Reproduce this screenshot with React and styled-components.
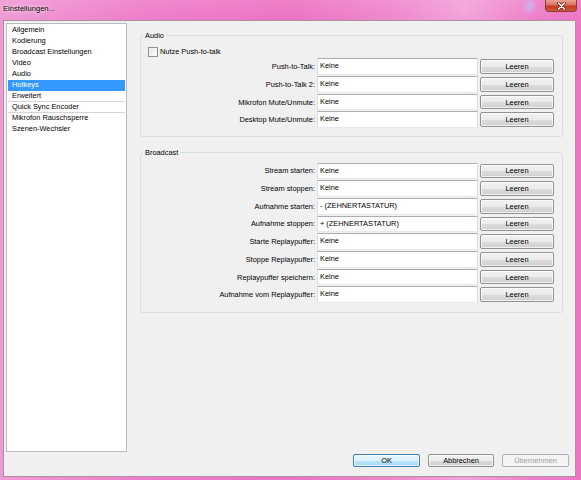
import React from 'react';
import styled, { createGlobalStyle } from 'styled-components';

const GlobalStyle = createGlobalStyle`
  html, body {
    margin: 0;
    padding: 0;
    background: #ee7ec9;
  }
  * {
    box-sizing: border-box;
  }
`;

const pages = [
  'Allgemein',
  'Kodierung',
  'Broadcast Einstellungen',
  'Video',
  'Audio',
  'Hotkeys',
  'Erweitert',
  'Quick Sync Encoder',
  'Mikrofon Rauschsperre',
  'Szenen-Wechsler',
];

const audioKeys = [
  ['Push-to-Talk:', 'Keine'],
  ['Push-to-Talk 2:', 'Keine'],
  ['Mikrofon Mute/Unmute:', 'Keine'],
  ['Desktop Mute/Unmute:', 'Keine'],
];

const broadcastKeys = [
  ['Stream starten:', 'Keine'],
  ['Stream stoppen:', 'Keine'],
  ['Aufnahme starten:', '- (ZEHNERTASTATUR)'],
  ['Aufnahme stoppen:', '+ (ZEHNERTASTATUR)'],
  ['Starte Replaypuffer:', 'Keine'],
  ['Stoppe Replaypuffer:', 'Keine'],
  ['Replaypuffer speichern:', 'Keine'],
  ['Aufnahme vom Replaypuffer:', 'Keine'],
];

const Frame = styled.div`
  width: 581px;
  height: 480px;
  display: flex;
  flex-direction: column;
  padding: 0 5px 3px 3px;
  font-family: 'Liberation Sans', Arial, sans-serif;
  font-size: 7.4px;
  color: #000;
  background:
    linear-gradient(180deg, rgba(255, 255, 255, 0.1) 0%, rgba(255, 255, 255, 0) 20px),
    linear-gradient(90deg, #f09ad3 0%, #ee7cc9 25%, #ec72c3 50%, #ef88cd 68%, #f3a2d8 80%, #ee7ec9 92%, #ec76c5 100%);
`;

const TitleBar = styled.div`
  height: 20px;
  display: flex;
  align-items: flex-start;
`;

const Title = styled.div`
  padding: 4px 0 0 0;
  font-size: 7.6px;
  text-shadow: 0 0 5px rgba(255, 255, 255, 0.9), 0 0 2px rgba(255, 255, 255, 0.8);
`;

const Captions = styled.div`
  margin-left: auto;
  margin-right: -1px;
  display: flex;
  align-items: flex-start;
  gap: 8px;
`;

const GhostButton = styled.div`
  width: 15px;
  height: 15px;
  border-radius: 0 0 4px 4px;
  background: radial-gradient(circle at 50% 40%, rgba(200, 185, 245, 0.9), rgba(236, 140, 210, 0) 75%);
`;

const CloseButton = styled.div`
  width: 32px;
  height: 12px;
  display: flex;
  align-items: center;
  justify-content: center;
  border: 1px solid #8e3a35;
  border-top: none;
  border-radius: 0 0 4px 4px;
  background: linear-gradient(180deg, #e9a393 0%, #d8735f 45%, #c53a22 55%, #d2573c 100%);
`;

const Client = styled.div`
  flex: 1;
  display: flex;
  flex-direction: column;
  background: #f0f0f0;
  border: 1px solid #a7939f;
`;

const Main = styled.div`
  flex: 1;
  display: flex;
  padding: 2px 0 0 2px;
`;

const PageList = styled.ul`
  list-style: none;
  margin: 0;
  padding: 1px;
  width: 121px;
  background: #fff;
  border: 1px solid #b9bcc1;
`;

const PageItem = styled.li`
  height: 11px;
  line-height: 10px;
  padding-left: 4px;
  white-space: nowrap;
  background: ${(p) => (p.$selected ? '#3399ff' : 'transparent')};
  color: ${(p) => (p.$selected ? '#fff' : '#000')};
  border-bottom: 1px solid ${(p) => (p.$divider ? '#d4d4d4' : 'transparent')};
`;

const Panel = styled.div`
  margin: 8px 0 0 13px;
  width: 423px;
  display: flex;
  flex-direction: column;
  gap: 11px;
`;

const Group = styled.fieldset`
  margin: 0;
  padding: ${(p) => p.$pad};
  border: 1px solid #d5dfe5;
  border-radius: 3px;
  min-width: 0;
`;

const Legend = styled.legend`
  margin-left: 2px;
  padding: 0 2px;
  line-height: 9px;
`;

const CheckRow = styled.label`
  height: 11px;
  display: flex;
  align-items: center;
  gap: 2px;
  padding-left: 7px;
`;

const CheckBox = styled.span`
  width: 10px;
  height: 10px;
  border: 1px solid #8f8f8f;
  background: linear-gradient(135deg, #dcdcdc 0%, #f4f4f4 60%, #ffffff 100%);
  box-shadow: inset 0 0 0 1px #f4f4f4;
`;

const KeyGrid = styled.div`
  display: grid;
  grid-template-columns: 174px 161px 74px;
  grid-auto-rows: 16.7px;
  column-gap: 2px;
  row-gap: 1px;
  margin-top: ${(p) => p.$top || 0}px;
`;

const KeyLabel = styled.div`
  align-self: center;
  text-align: right;
  white-space: nowrap;
`;

const KeyField = styled.div`
  background: #fff;
  border: 1px solid #dbdfe6;
  border-top-color: #abadb3;
  border-bottom-color: #e3e9ef;
  padding: 2px 0 0 2px;
  line-height: 9px;
  white-space: nowrap;
  overflow: hidden;
`;

const Button = styled.div`
  height: ${(p) => p.$height || 14.7}px;
  width: ${(p) => (p.$width ? `${p.$width}px` : 'auto')};
  align-self: center;
  display: flex;
  align-items: center;
  justify-content: center;
  border: 1px solid ${(p) => (p.$disabled ? '#adb2b5' : p.$default ? '#3c7fb1' : '#929292')};
  border-radius: 2px;
  color: ${(p) => (p.$disabled ? '#a0a0a0' : '#000')};
  background: ${(p) =>
    p.$disabled
      ? '#f4f4f4'
      : p.$default
      ? 'linear-gradient(180deg, #eaf6fd 0%, #d9f0fc 50%, #bee6fd 51%, #a7d9f5 100%)'
      : 'linear-gradient(180deg, #f2f2f2 0%, #ebebeb 50%, #dddddd 51%, #cfcfcf 100%)'};
  box-shadow: inset 0 0 0 1px ${(p) => (p.$disabled ? 'transparent' : 'rgba(255,255,255,0.7)')};
`;

const Footer = styled.div`
  display: flex;
  justify-content: flex-end;
  gap: 8px;
  padding: 2px 6px 9px 0;
`;

function HotkeyRows({ rows, top }) {
  return (
    <KeyGrid $top={top}>
      {rows.map(([label, value]) => (
        <React.Fragment key={label}>
          <KeyLabel>{label}</KeyLabel>
          <KeyField>{value}</KeyField>
          <Button>Leeren</Button>
        </React.Fragment>
      ))}
    </KeyGrid>
  );
}

export default function App() {
  return (
    <>
      <GlobalStyle />
      <Frame>
        <TitleBar>
          <Title>Einstellungen...</Title>
          <Captions>
            <GhostButton />
            <CloseButton>
              <svg width="9" height="8" viewBox="0 0 9 8">
                <path d="M1.5 1 L7.5 7 M7.5 1 L1.5 7" stroke="#5a1b14" strokeWidth="3" strokeLinecap="round" />
                <path d="M1.5 1 L7.5 7 M7.5 1 L1.5 7" stroke="#fff" strokeWidth="1.6" strokeLinecap="round" />
              </svg>
            </CloseButton>
          </Captions>
        </TitleBar>
        <Client>
          <Main>
            <PageList>
              {pages.map((name) => (
                <PageItem
                  key={name}
                  $selected={name === 'Hotkeys'}
                  $divider={name === 'Erweitert' || name === 'Quick Sync Encoder'}
                >
                  {name}
                </PageItem>
              ))}
            </PageList>
            <Panel>
              <Group $pad="6px 0 8px 0">
                <Legend>Audio</Legend>
                <CheckRow>
                  <CheckBox />
                  Nutze Push-to-talk
                </CheckRow>
                <HotkeyRows rows={audioKeys} top={1.3} />
              </Group>
              <Group $pad="5.5px 0 9px 0">
                <Legend>Broadcast</Legend>
                <HotkeyRows rows={broadcastKeys} />
              </Group>
            </Panel>
          </Main>
          <Footer>
            <Button $default $width={67} $height={13.5}>OK</Button>
            <Button $width={66} $height={13.5}>Abbrechen</Button>
            <Button $disabled $width={67} $height={13.5}>Übernehmen</Button>
          </Footer>
        </Client>
      </Frame>
    </>
  );
}
